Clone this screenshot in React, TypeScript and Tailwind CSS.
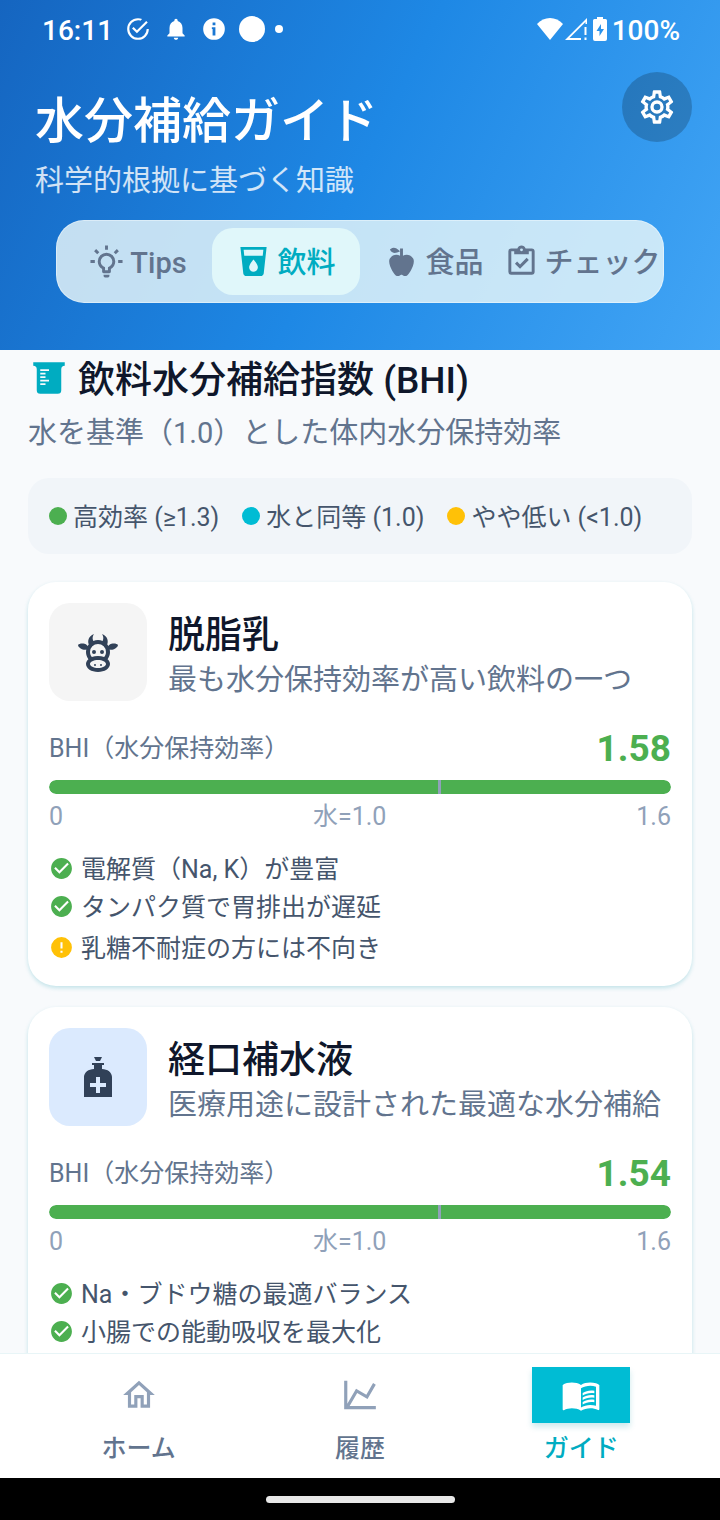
import React, { useState } from 'react';
import clsx from 'clsx';

const ICONS = {
  cog: 'M12,8A4,4 0 0,1 16,12A4,4 0 0,1 12,16A4,4 0 0,1 8,12A4,4 0 0,1 12,8M12,10A2,2 0 0,0 10,12A2,2 0 0,0 12,14A2,2 0 0,0 14,12A2,2 0 0,0 12,10M10,22C9.75,22 9.54,21.82 9.5,21.58L9.13,18.93C8.5,18.68 7.96,18.34 7.44,17.94L4.95,18.95C4.73,19.03 4.46,18.95 4.34,18.73L2.34,15.27C2.21,15.05 2.27,14.78 2.46,14.63L4.57,12.97L4.5,12L4.57,11L2.46,9.37C2.27,9.22 2.21,8.95 2.34,8.73L4.34,5.27C4.46,5.05 4.73,4.96 4.95,5.05L7.44,6.05C7.96,5.66 8.5,5.32 9.13,5.07L9.5,2.42C9.54,2.18 9.75,2 10,2H14C14.25,2 14.46,2.18 14.5,2.42L14.87,5.07C15.5,5.32 16.04,5.66 16.56,6.05L19.05,5.05C19.27,4.96 19.54,5.05 19.66,5.27L21.66,8.73C21.79,8.95 21.73,9.22 21.54,9.37L19.43,11L19.5,12L19.43,13L21.54,14.63C21.73,14.78 21.79,15.05 21.66,15.27L19.66,18.73C19.54,18.95 19.27,19.04 19.05,18.95L16.56,17.95C16.04,18.34 15.5,18.68 14.87,18.93L14.5,21.58C14.46,21.82 14.25,22 14,22H10M11.25,4L10.88,6.61C9.68,6.86 8.62,7.5 7.85,8.39L5.44,7.35L4.69,8.65L6.8,10.2C6.4,11.37 6.4,12.64 6.8,13.8L4.68,15.36L5.43,16.66L7.86,15.62C8.63,16.5 9.68,17.14 10.87,17.38L11.24,20H12.76L13.13,17.39C14.32,17.14 15.37,16.5 16.14,15.62L18.57,16.66L19.32,15.36L17.2,13.81C17.6,12.64 17.6,11.37 17.2,10.2L19.31,8.65L18.56,7.35L16.15,8.39C15.38,7.5 14.32,6.86 13.12,6.62L12.75,4H11.25Z',
  lightbulb: 'M20,11H23V13H20V11M1,11H4V13H1V11M13,1V4H11V1H13M4.92,3.5L7.05,5.64L5.63,7.05L3.5,4.93L4.92,3.5M16.95,5.63L19.07,3.5L20.5,4.93L18.37,7.05L16.95,5.63M12,6A6,6 0 0,1 18,12C18,14.22 16.79,16.16 15,17.2V19A1,1 0 0,1 14,20H10A1,1 0 0,1 9,19V17.2C7.21,16.16 6,14.22 6,12A6,6 0 0,1 12,6M14,21V22A1,1 0 0,1 13,23H11A1,1 0 0,1 10,22V21H14M11,18H13V15.87C14.73,15.43 16,13.86 16,12A4,4 0 0,0 12,8A4,4 0 0,0 8,12C8,13.86 9.27,15.43 11,15.87V18Z',
  cup: 'M18.32,8H5.67L5.23,4H18.77M12,19A3,3 0 0,1 9,16C9,14 12,10.6 12,10.6C12,10.6 15,14 15,16A3,3 0 0,1 12,19M3,2L5,20.23C5.13,21.23 5.97,22 7,22H17C18,22 18.87,21.23 19,20.23L21,2H3Z',
  apple: 'M20,10C22,13 17,22 15,22C13,22 13,21 12,21C11,21 11,22 9,22C7,22 2,13 4,10C6,7 9,7 11,8V5C5.38,8.07 4.11,3.78 4.11,3.78C4.11,3.78 6.77,0.19 11,5V3H13V8C15,7 18,7 20,10Z',
  clipboard: 'M19,3H14.82C14.4,1.84 13.3,1 12,1C10.7,1 9.6,1.84 9.18,3H5A2,2 0 0,0 3,5V19A2,2 0 0,0 5,21H19A2,2 0 0,0 21,19V5A2,2 0 0,0 19,3M12,3A1,1 0 0,1 13,4A1,1 0 0,1 12,5A1,1 0 0,1 11,4A1,1 0 0,1 12,3M7,7H17V5H19V19H5V5H7V7M7.5,13.5L9,12L11,14L15.5,9.5L17,11L11,17L7.5,13.5Z',
  beaker: 'M3,3H21V5A2,2 0 0,0 19,7V19A2,2 0 0,1 17,21H7A2,2 0 0,1 5,19V7A2,2 0 0,0 3,5V3M7,7V8H12V7H7M7,9V10H10V9H7M7,11V12H10V11H7M7,13V14H12V13H7M7,15V16H10V15H7Z',
  cow: 'M10.5,18A0.5,0.5 0 0,1 11,18.5A0.5,0.5 0 0,1 10.5,19A0.5,0.5 0 0,1 10,18.5A0.5,0.5 0 0,1 10.5,18M13.5,18A0.5,0.5 0 0,1 14,18.5A0.5,0.5 0 0,1 13.5,19A0.5,0.5 0 0,1 13,18.5A0.5,0.5 0 0,1 13.5,18M10,11A1,1 0 0,1 11,12A1,1 0 0,1 10,13A1,1 0 0,1 9,12A1,1 0 0,1 10,11M14,11A1,1 0 0,1 15,12A1,1 0 0,1 14,13A1,1 0 0,1 13,12A1,1 0 0,1 14,11M18,18C18,20.21 15.31,22 12,22C8.69,22 6,20.21 6,18C6,17.1 6.45,16.27 7.2,15.6C6.45,14.6 6,13.35 6,12L6.12,10.78C5.58,10.93 4.93,10.93 4.4,10.78C3.38,10.5 1.84,9.35 2.07,8.55C2.3,7.75 4.21,7.6 5.23,7.9C5.82,8.07 6.45,8.5 6.82,8.96L7.39,8.15C6.79,7.05 7,4 10,3L9.91,3.14C9.63,3.58 8.91,4.97 9.67,6.47C10.39,6.17 11.17,6 12,6C12.83,6 13.61,6.17 14.33,6.47C15.09,4.97 14.37,3.58 14.09,3.14L14,3C17,4 17.21,7.05 16.61,8.15L17.18,8.96C17.55,8.5 18.18,8.07 18.77,7.9C19.79,7.6 21.7,7.75 21.93,8.55C22.16,9.35 20.62,10.5 19.6,10.78C19.07,10.93 18.42,10.93 17.88,10.78L18,12C18,13.35 17.55,14.6 16.8,15.6C17.55,16.27 18,17.1 18,18M12,16C9.79,16 8,16.9 8,18C8,19.1 9.79,20 12,20C14.21,20 16,19.1 16,18C16,16.9 14.21,16 12,16M12,14C13.12,14 14.17,14.21 15.07,14.56C15.65,13.87 16,13 16,12A4,4 0 0,0 12,8A4,4 0 0,0 8,12C8,13 8.35,13.87 8.93,14.56C9.83,14.21 10.88,14 12,14Z',
  bottle: 'M13 4H11L10 2H14L13 4M14 8V6H15V5H9V6H10V8C7.24 8 5 9.8 5 12V22H19V12C19 9.8 16.76 8 14 8M16 17H13V20H11V17H8V15H11V12H13V15H16V17Z',
  check: 'M12 2C6.5 2 2 6.5 2 12S6.5 22 12 22 22 17.5 22 12 17.5 2 12 2M10 17L5 12L6.41 10.59L10 14.17L17.59 6.58L19 8L10 17Z',
  alert: 'M13,13H11V7H13M13,17H11V15H13M12,2A10,10 0 0,0 2,12A10,10 0 0,0 12,22A10,10 0 0,0 22,12A10,10 0 0,0 12,2Z',
  home: 'M12 5.69L17 10.19V18H15V12H9V18H7V10.19L12 5.69M12 3L2 12H5V20H11V14H13V20H19V12H22',
  chart: 'M16,11.78L20.24,4.45L21.97,5.45L16.74,14.5L10.23,10.75L5.46,19H22V21H2V3H4V17.54L9.5,8L16,11.78Z',
  book: 'M21,5C19.89,4.65 18.67,4.5 17.5,4.5C15.55,4.5 13.45,4.9 12,6C10.55,4.9 8.45,4.5 6.5,4.5C4.55,4.5 2.45,4.9 1,6V20.65C1,20.9 1.25,21.15 1.5,21.15C1.6,21.15 1.65,21.1 1.75,21.1C3.1,20.45 5.05,20 6.5,20C8.45,20 10.55,20.4 12,21.5C13.35,20.65 15.8,20 17.5,20C19.15,20 20.85,20.3 22.25,21.05C22.35,21.1 22.4,21.1 22.5,21.1C22.75,21.1 23,20.85 23,20.6V6C22.4,5.55 21.75,5.25 21,5M21,18.5C19.9,18.15 18.7,18 17.5,18C15.8,18 13.35,18.65 12,19.5V8C13.35,7.15 15.8,6.5 17.5,6.5C18.7,6.5 19.9,6.65 21,7V18.5Z',
  bookLines: 'M13,10.8C15,9.5 17.6,9 20,9.5V11C17.6,10.5 15,11 13,12.3ZM13,13.5C15,12.2 17.6,11.7 20,12.2V13.7C17.6,13.2 15,13.7 13,15ZM13,16.2C15,14.9 17.6,14.4 20,14.9V16.4C17.6,15.9 15,16.4 13,17.7Z',
  checkRing: 'M20,12A8,8 0 0,1 12,20A8,8 0 0,1 4,12A8,8 0 0,1 12,4C12.76,4 13.5,4.11 14.2,4.31L15.77,2.74C14.61,2.26 13.34,2 12,2A10,10 0 0,0 2,12A10,10 0 0,0 12,22A10,10 0 0,0 22,12M7.91,10.08L6.5,11.5L11,16L21,6L19.59,4.58L11,13.17L7.91,10.08Z',
  bell: 'M12 22c1.1 0 2-.9 2-2h-4c0 1.1.89 2 2 2zm6-6v-5c0-3.07-1.64-5.64-4.5-6.32V4c0-.83-.67-1.5-1.5-1.5s-1.5.67-1.5 1.5v.68C7.63 5.36 6 7.92 6 11v5l-2 2v1h16v-1l-2-2z',
  info: 'M12,2A10,10 0 0,0 2,12A10,10 0 0,0 12,22A10,10 0 0,0 22,12A10,10 0 0,0 12,2M10.7,6H13.3V8.6H10.7M10,10.3H13.3V18H10.7V12H10Z',
};

type IconName = keyof typeof ICONS;

const Icon = ({ name, className }: { name: IconName; className?: string }) => (
  <svg viewBox="0 0 24 24" fill="currentColor" fillRule="evenodd" aria-hidden="true" className={clsx('shrink-0', className)}>
    <path d={ICONS[name]} />
    {name === 'book' && <path d={ICONS.bookLines} />}
  </svg>
);

interface Note {
  type: 'good' | 'warn';
  text: string;
}

interface Drink {
  name: string;
  description: string;
  icon: IconName;
  iconBg: string;
  bhi: number;
  notes: Note[];
}

const MAX_BHI = 1.6;

const tabs: { id: string; label: string; icon: IconName }[] = [
  { id: 'tips', label: 'Tips', icon: 'lightbulb' },
  { id: 'drinks', label: '飲料', icon: 'cup' },
  { id: 'foods', label: '食品', icon: 'apple' },
  { id: 'check', label: 'チェック', icon: 'clipboard' },
];

const legend = [
  { label: '高効率 (≥1.3)', color: 'bg-[#4caf50]' },
  { label: '水と同等 (1.0)', color: 'bg-[#00bcd4]' },
  { label: 'やや低い (<1.0)', color: 'bg-[#ffc107]' },
];

const drinks: Drink[] = [
  {
    name: '脱脂乳',
    description: '最も水分保持効率が高い飲料の一つ',
    icon: 'cow',
    iconBg: 'bg-[#f5f5f5]',
    bhi: 1.58,
    notes: [
      { type: 'good', text: '電解質（Na, K）が豊富' },
      { type: 'good', text: 'タンパク質で胃排出が遅延' },
      { type: 'warn', text: '乳糖不耐症の方には不向き' },
    ],
  },
  {
    name: '経口補水液',
    description: '医療用途に設計された最適な水分補給',
    icon: 'bottle',
    iconBg: 'bg-blue-100',
    bhi: 1.54,
    notes: [
      { type: 'good', text: 'Na・ブドウ糖の最適バランス' },
      { type: 'good', text: '小腸での能動吸収を最大化' },
    ],
  },
];

const navItems: { id: string; label: string; icon: IconName }[] = [
  { id: 'home', label: 'ホーム', icon: 'home' },
  { id: 'history', label: '履歴', icon: 'chart' },
  { id: 'guide', label: 'ガイド', icon: 'book' },
];

const StatusBar = () => (
  <div className="flex h-[58px] items-center justify-between pl-[42px] pr-10 text-[28px] font-medium leading-8">
    <div className="flex items-center">
      <span className="pt-[3px]">16:11</span>
      <Icon name="checkRing" className="ml-3 size-[26px]" />
      <Icon name="bell" className="ml-3 size-[26px]" />
      <Icon name="info" className="ml-3 size-[26px]" />
      <span className="ml-3 size-[26px] rounded-full bg-white" />
      <span className="ml-[10px] size-2 rounded-full bg-white" />
    </div>
    <div className="flex items-center">
      <svg viewBox="0 0 26 22" fill="currentColor" aria-hidden="true" className="h-[22px] w-[26px]">
        <path d="M13 22L0 6C7-2 19-2 26 6Z" />
      </svg>
      <svg viewBox="0 0 22 22" fill="currentColor" fillRule="evenodd" aria-hidden="true" className="ml-[2px] size-[22px]">
        <path d="M0 22L22 0V6H20.500V4L4.500 20H16V22ZM19.500 9H21.500V17H19.500ZM19.500 19.500H21.500V22H19.500Z" />
      </svg>
      <svg viewBox="0 0 14 24" fill="currentColor" fillRule="evenodd" aria-hidden="true" className="ml-[6px] h-6 w-[14px]">
        <path d="M4 0H10V2H12.5Q14 2 14 3.500V22Q14 24 12 24H2Q0 24 0 22V3.500Q0 2 1.500 2H4ZM8 7L3.500 14H6.500V19L11 12H8Z" />
      </svg>
      <span className="ml-[5px] pt-[3px]">100%</span>
    </div>
  </div>
);

const DrinkCard = ({ drink }: { drink: Drink }) => (
  <article className="min-h-[404px] rounded-[28px] bg-white p-[21px] shadow-[0_2px_4px_rgba(0,151,167,0.22)]">
    <div className="flex items-center gap-[21px]">
      <div className={clsx('flex size-[98px] shrink-0 items-center justify-center rounded-[21px] text-slate-700', drink.iconBg)}>
        <Icon name={drink.icon} className="size-12" />
      </div>
      <div className="min-w-0 pt-[7px]">
        <h3 className="text-[37px] font-medium leading-[48px] text-slate-900">{drink.name}</h3>
        <p className="text-[29px] leading-10 text-slate-500">{drink.description}</p>
      </div>
    </div>

    <div className="mt-7 flex items-center justify-between">
      <span className="text-[25px] leading-10 text-slate-500">BHI（水分保持効率）</span>
      <span className="text-[37px] font-bold leading-10 text-[#4caf50]">{drink.bhi.toFixed(2)}</span>
    </div>

    <div className="relative mt-[11px] h-[14px] overflow-hidden rounded-full bg-slate-100">
      <div className="h-full rounded-full bg-[#4caf50]" style={{ width: `${Math.min(100, Math.ceil((drink.bhi / 1.54) * 100))}%` }} />
      {/* water baseline */}
      <div className="absolute top-0 h-full w-[3px] bg-slate-400" style={{ left: `${100 / MAX_BHI}%` }} />
    </div>
    <div className="mt-[7px] flex justify-between text-[25px] leading-8 text-slate-400">
      <span>0</span>
      <span>水=1.0</span>
      <span>1.6</span>
    </div>

    <ul className="mt-[18px] flex flex-col gap-[3px] text-[25px] leading-8 text-slate-600">
      {drink.notes.map((note) => (
        <li key={note.text} className={clsx('flex items-center gap-[7px]', note.type === 'warn' && 'mt-[3px]')}>
          {note.type === 'good' ? (
            <Icon name="check" className="size-[25px] text-[#4caf50]" />
          ) : (
            <Icon name="alert" className="size-[25px] text-[#ffc107]" />
          )}
          <span className="pt-[3px]">{note.text}</span>
        </li>
      ))}
    </ul>
  </article>
);

export default function App() {
  const [activeTab, setActiveTab] = useState('drinks');
  const [activeNav, setActiveNav] = useState('guide');

  return (
    <div className="flex h-screen flex-col bg-slate-50 font-[Roboto,'Noto_Sans_CJK_JP',sans-serif]" lang="ja">
      <header className="shrink-0 bg-[linear-gradient(116deg,#1565c0,#1e88e5_50%,#42a5f5)] pb-[47px] text-white">
        <StatusBar />
        <div className="flex items-start justify-between pl-[35px] pr-7 pt-[14px]">
          <div className="pt-[22px]">
            <h1 className="text-[49px] font-medium leading-[56px]">水分補給ガイド</h1>
            <p className="mt-[10px] text-[29px] leading-[42px] text-white/80">科学的根拠に基づく知識</p>
          </div>
          <button type="button" aria-label="設定" className="flex size-[70px] items-center justify-center rounded-full bg-black/20">
            <Icon name="cog" className="size-10" />
          </button>
        </div>

        <div className="mx-14 mt-[18px] grid grid-cols-4 rounded-[28px] border border-white/40 bg-[#effafa]/80 p-[7px]">
          {tabs.map((tab) => (
            <button
              key={tab.id}
              type="button"
              onClick={() => setActiveTab(tab.id)}
              className={clsx(
                'flex h-[67px] items-center justify-center gap-[6px] whitespace-nowrap rounded-[21px] text-[29px] font-medium',
                activeTab === tab.id ? 'bg-[#e0f7fa] text-[#00acc1]' : 'text-slate-500'
              )}
            >
              <Icon name={tab.icon} className="size-[35px]" />
              <span className="pt-1">{tab.label}</span>
            </button>
          ))}
        </div>
      </header>

      <main className="min-h-0 flex-1 overflow-hidden px-7 pt-1">
        <h2 className="flex items-center gap-2 text-[37px] font-medium leading-[42px] text-slate-900">
          <Icon name="beaker" className="size-[42px] text-[#00acc1]" />
          <span className="pt-[6px]">飲料水分補給指数 (BHI)</span>
        </h2>
        <p className="mt-[11px] text-[29px] leading-10 text-slate-500">水を基準（1.0）とした体内水分保持効率</p>

        <div className="mt-[25px] flex gap-[23px] rounded-[21px] bg-slate-100 px-[21px] py-[18px]">
          {legend.map((item) => (
            <div key={item.label} className="flex items-center gap-[6px] whitespace-nowrap text-[25px] leading-9 text-slate-600">
              <span className={clsx('size-[18px] rounded-full', item.color)} />
              <span className="pt-1">{item.label}</span>
            </div>
          ))}
        </div>

        <div className="mt-7 flex flex-col gap-[21px]">
          {drinks.map((drink) => (
            <DrinkCard key={drink.name} drink={drink} />
          ))}
        </div>
      </main>

      <nav className="relative grid shrink-0 grid-cols-3 border-t border-[#e8f5f7] bg-white px-7 pb-[14px] pt-[13px]">
        {navItems.map((item) => {
          const active = item.id === activeNav;
          return (
            <button
              key={item.id}
              type="button"
              onClick={() => setActiveNav(item.id)}
              className={clsx(
                'flex flex-col items-center gap-[11px] text-[25px] font-medium leading-[30px]',
                active ? 'text-[#00acc1]' : 'text-slate-500'
              )}
            >
              <span
                className={clsx(
                  'flex h-14 w-[98px] items-center justify-center',
                  active ? 'bg-[#00bcd4] text-white shadow-[0_4px_6px_rgba(0,151,167,0.2)]' : 'text-slate-400'
                )}
              >
                <Icon name={item.icon} className={active ? 'size-10' : 'size-[38px]'} />
              </span>
              {item.label}
            </button>
          );
        })}
      </nav>

      <div className="flex h-[42px] shrink-0 items-center justify-center bg-black">
        <div className="h-[7px] w-[189px] rounded-full bg-[#e8e8e8]" />
      </div>
    </div>
  );
}
